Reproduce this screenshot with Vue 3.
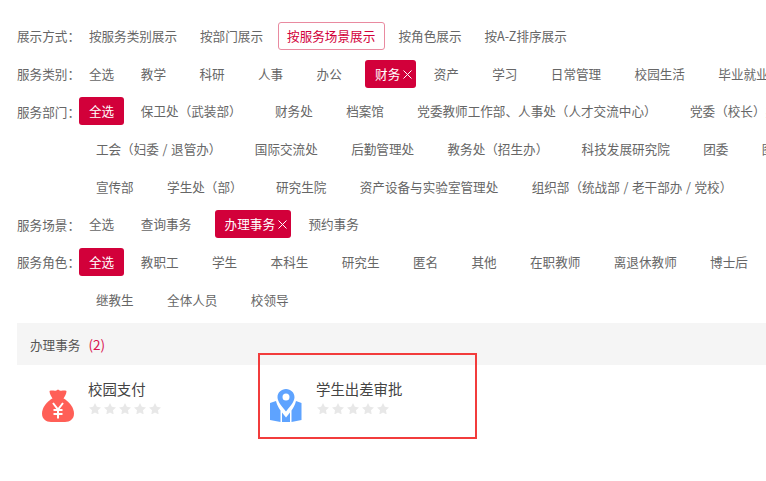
<script setup>
const line1 = ['按服务类别展示', '按部门展示', '按服务场景展示', '按角色展示', '按A-Z排序展示']
const rows = [
  { label: '服务类别:', items: ['全选', '教学', '科研', '人事', '办公', '财务', '资产', '学习', '日常管理', '校园生活', '毕业就业'], on: '财务', x: true },
  { label: '服务部门:', items: ['全选', '保卫处(武装部)', '财务处', '档案馆', '党委教师工作部、人事处(人才交流中心)', '党委(校长)办公室'], on: '全选' },
  { label: '', items: ['工会(妇委 / 退管办)', '国际交流处', '后勤管理处', '教务处(招生办)', '科技发展研究院', '团委', '图书馆'] },
  { label: '', items: ['宣传部', '学生处(部)', '研究生院', '资产设备与实验室管理处', '组织部(统战部 / 老干部办 / 党校)'] },
  { label: '服务场景:', items: ['全选', '查询事务', '办理事务', '预约事务'], on: '办理事务', x: true },
  { label: '服务角色:', items: ['全选', '教职工', '学生', '本科生', '研究生', '匿名', '其他', '在职教师', '离退休教师', '博士后'], on: '全选' },
  { label: '', items: ['继教生', '全体人员', '校领导'] }
]
// Full-width punctuation, as in the reference; applied here so the data above stays readable.
const full = (s) => s.replace(/\(/g, '\uFF08').replace(/\)/g, '\uFF09').replace(/:/g, '\uFF1A')
const cards = [
  { name: '校园支付', icon: 'bag' },
  { name: '学生出差审批', icon: 'map' }
]
const stars = [1, 2, 3, 4, 5]
</script>

<template>
  <div class="page">
    <div class="filters">
      <div class="row modes">
        <span class="label">{{ full('展示方式:') }}</span>
        <span v-for="m in line1" :key="m" class="opt" :class="{ outlined: m === '按服务场景展示' }">{{ m }}</span>
      </div>
      <div v-for="(r, i) in rows" :key="i" class="row" :class="{ cont: !r.label }">
        <span class="label">{{ full(r.label) }}</span>
        <span
          v-for="it in r.items"
          :key="it"
          class="opt"
          :class="{ active: it === r.on, first: it === '全选', closable: r.x && it === r.on }"
        >{{ full(it) }}<svg v-if="r.x && it === r.on" class="close" viewBox="0 0 9 9"><path d="M.5.5l8 8M8.500.5l-8 8" /></svg></span>
      </div>
    </div>
    <div class="head">办理事务<em>(2)</em></div>
    <div class="cards">
      <div v-for="c in cards" :key="c.name" class="card">
        <svg v-if="c.icon === 'bag'" class="ico" viewBox="0 0 32 33">
          <path fill="#ff5f57" d="M7.500 2C10.500.5 13 3 16 .5c3 2.500 5.500 0 8.500 1.500 0 3.500-2 5.500-3 7.500h-11c-1-2-3-4-3-7.500Z" />
          <path fill="#ff5f57" d="M11 9h10C27.500 12.500 32 19 32 24.500 32 30 28 33 23 33H9C4 33 0 30 0 24.500 0 19 4.500 12.500 11 9Z" />
          <path fill="none" stroke="#fff" stroke-width="2" d="M11 14l5 6.500 5-6.500M16 20.500v9M11.500 21h9M11.500 25h9" />
        </svg>
        <svg v-else class="ico" viewBox="0 0 32 33">
          <path fill="#5ea3ff" fill-rule="evenodd" d="M16 0c-4.800 0-8.500 3.600-8.500 8.300 0 4.700 5 10 8.500 14.200 3.500-4.200 8.500-9.500 8.500-14.200C24.500 3.600 20.800 0 16 0Zm0 4.500a3.500 3.500 0 1 1 0 7 3.500 3.500 0 0 1 0-7Z" />
          <path fill="#5ea3ff" d="M0 14l6-2c1 4 3 7.500 4.500 9.500V33L0 31ZM31.500 14 26 12c-1 4-3 7.500-4.500 9.500V33l10-2ZM12 23.500l4 5 4-5V33h-8Z" />
        </svg>
        <div class="info">
          <div class="name">{{ c.name }}</div>
          <div class="stars">
            <svg v-for="s in stars" :key="s" viewBox="0 0 24 23"><path d="M12 0l3.700 7.600 8.300 1.200-6 5.900 1.400 8.300L12 19l-7.400 4L6 14.700 0 8.800l8.300-1.200Z" /></svg>
          </div>
        </div>
      </div>
    </div>
    <div class="mark"></div>
  </div>
</template>

<style scoped>
.page {
  position: relative;
  width: 766px;
  height: 481px;
  overflow: hidden;
  background: #fff;
  font-family: "Noto Sans CJK SC", "Liberation Sans", sans-serif;
  font-size: 12.600px;
  color: #666;
}
.filters {
  padding: 17px 0 0 17px;
}
.row {
  display: flex;
  align-items: center;
  height: 37.700px;
  white-space: nowrap;
}
.label {
  width: 62px;
  flex: none;
}
.cont .label {
  width: 69px;
}
.opt {
  flex: none;
  height: 28px;
  line-height: 28px;
  padding: 0 9.900px;
  margin-right: 13.600px;
  border-radius: 3px;
  box-sizing: border-box;
  word-spacing: 0.800px;
}
.first {
  margin-right: 7px;
}
.modes .opt {
  margin-right: 3.200px;
}
.modes .outlined {
  border: 1px solid #e98aa0;
  color: #d2003a;
  line-height: 26px;
  padding: 0 8.400px 0 8px;
  margin: 0 4px 0 2px;
}
.active {
  background: #d2003a;
  color: #fff;
}
.closable {
  padding-right: 4px;
  margin-right: 7.500px;
}
.close {
  width: 9px;
  height: 9px;
  margin-left: 3px;
  fill: none;
  stroke: #fff;
  stroke-width: 1;
}
.head {
  margin: 4.400px 0 0 17px;
  height: 42px;
  line-height: 42px;
  padding-left: 13px;
  background: #f5f5f5;
  color: #555;
}
.head em {
  font-style: normal;
  font-size: 13.500px;
  color: #d9124f;
  margin-left: 8px;
}
.cards {
  display: flex;
  padding: 14px 0 0 42px;
}
.card {
  display: flex;
  width: 228px;
  flex: none;
}
.ico {
  width: 32px;
  height: 33px;
  margin-top: 10px;
  flex: none;
}
.info {
  margin-left: 14px;
}
.name {
  font-size: 14.400px;
  color: #444;
  line-height: 20px;
}
.stars {
  display: flex;
  gap: 2.900px;
  margin: 4px 0 0 1px;
}
.stars svg {
  width: 12px;
  height: 11.500px;
  fill: #e8e8e8;
}
.mark {
  position: absolute;
  left: 258px;
  top: 353px;
  width: 219px;
  height: 86px;
  box-sizing: border-box;
  border: 2px solid #f23c3c;
}
</style>
